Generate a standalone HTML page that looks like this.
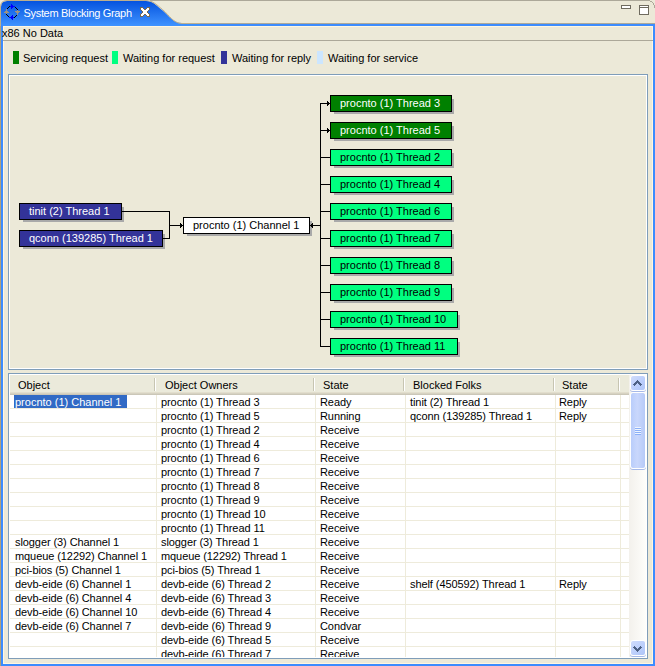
<!DOCTYPE html>
<html><head><meta charset="utf-8">
<style>
*{margin:0;padding:0;box-sizing:border-box}
html,body{width:655px;height:666px;overflow:hidden;background:#ECE9D8;font-family:"Liberation Sans",sans-serif;font-size:11px;color:#000}
.a{position:absolute}
.t{position:absolute;white-space:nowrap;line-height:15px;height:15px}
.w{color:#fff}
</style></head><body>
<!-- header strip -->
<div class="a" style="left:0;top:0;width:655px;height:24px;background:#ECE9D8"></div>
<div class="a" style="left:146px;top:0;width:504px;height:1px;background:#ACA899"></div><svg class="a" style="left:648px;top:0" width="7" height="8" shape-rendering="crispEdges"><rect x="2" y="1" width="2" height="1" fill="#ACA899"/><rect x="4" y="2" width="1" height="1" fill="#ACA899"/><rect x="5" y="3" width="1" height="2" fill="#ACA899"/><rect x="6" y="5" width="1" height="3" fill="#ACA899"/></svg>
<div class="a" style="left:0;top:0;width:1px;height:666px;background:#ACA07F"></div>
<div class="a" style="left:0;top:23px;width:655px;height:1px;background:#ACA899"></div>
<div class="a" style="left:1px;top:24px;width:654px;height:2px;background:#3C8CFF"></div>
<!-- active tab -->
<svg class="a" style="left:0;top:0" width="200" height="26">
<defs><linearGradient id="tg" x1="0" y1="0" x2="0" y2="1"><stop offset="0" stop-color="#0553DF"/><stop offset="1" stop-color="#3F93FF"/></linearGradient></defs>
<path d="M0,0 L150,0 L150,8 L0,8 Z" fill="#EFEBDC"/><path d="M1,26 L1,7 Q1,1 7,1 L146,1 C153,1 157,6 162,10 C169,16 173,23 182,23 L200,23 L200,26 Z" fill="url(#tg)"/>
<path d="M0.5,26 L0.5,7 Q0.5,0.5 7,0.5 L146,0.5 C153,0.5 157.5,5.5 162.5,9.5 C169.5,15.5 173.5,23.5 182,23.5 L200,23.5" fill="none" stroke="#BDAF8E" stroke-width="1"/>
</svg>
<svg class="a" style="left:3px;top:3px" width="18" height="18" shape-rendering="crispEdges"><rect x="8" y="1" width="1" height="1" fill="#0000FF"/><rect x="8" y="2" width="2" height="1" fill="#0000FF"/><rect x="6" y="3" width="1" height="1" fill="#000000"/><rect x="7" y="3" width="5" height="1" fill="#0000FF"/><rect x="5" y="4" width="1" height="1" fill="#000000"/><rect x="8" y="4" width="2" height="1" fill="#0000FF"/><rect x="12" y="4" width="1" height="1" fill="#000000"/><rect x="4" y="5" width="1" height="1" fill="#000000"/><rect x="8" y="5" width="1" height="1" fill="#0000FF"/><rect x="13" y="5" width="1" height="1" fill="#000000"/><rect x="3" y="6" width="1" height="1" fill="#9E937F"/><rect x="14" y="6" width="1" height="1" fill="#000000"/><rect x="3" y="7" width="1" height="1" fill="#9E937F"/><rect x="14" y="7" width="1" height="1" fill="#9E937F"/><rect x="2" y="8" width="3" height="1" fill="#9E937F"/><rect x="12" y="8" width="5" height="1" fill="#9E937F"/><rect x="1" y="9" width="5" height="1" fill="#9E937F"/><rect x="13" y="9" width="3" height="1" fill="#9E937F"/><rect x="3" y="10" width="1" height="1" fill="#9E937F"/><rect x="14" y="10" width="1" height="1" fill="#9E937F"/><rect x="3" y="11" width="1" height="1" fill="#000000"/><rect x="14" y="11" width="1" height="1" fill="#9E937F"/><rect x="4" y="12" width="1" height="1" fill="#000000"/><rect x="9" y="12" width="1" height="1" fill="#0000FF"/><rect x="13" y="12" width="1" height="1" fill="#000000"/><rect x="5" y="13" width="1" height="1" fill="#000000"/><rect x="8" y="13" width="2" height="1" fill="#0000FF"/><rect x="12" y="13" width="1" height="1" fill="#000000"/><rect x="6" y="14" width="5" height="1" fill="#0000FF"/><rect x="11" y="14" width="1" height="1" fill="#000000"/><rect x="8" y="15" width="2" height="1" fill="#0000FF"/><rect x="9" y="16" width="1" height="1" fill="#0000FF"/></svg>
<div class="t w" style="left:23.5px;top:6px;letter-spacing:-0.32px">System Blocking Graph</div>
<svg class="a" style="left:140px;top:7px" width="10" height="10" shape-rendering="crispEdges"><rect x="0" y="0" width="3" height="1" fill="#7A6A50"/><rect x="7" y="0" width="3" height="1" fill="#7A6A50"/><rect x="0" y="1" width="1" height="1" fill="#7A6A50"/><rect x="1" y="1" width="2" height="1" fill="#FFFFFF"/><rect x="3" y="1" width="1" height="1" fill="#7A6A50"/><rect x="6" y="1" width="1" height="1" fill="#7A6A50"/><rect x="7" y="1" width="2" height="1" fill="#FFFFFF"/><rect x="9" y="1" width="1" height="1" fill="#7A6A50"/><rect x="0" y="2" width="1" height="1" fill="#7A6A50"/><rect x="1" y="2" width="3" height="1" fill="#FFFFFF"/><rect x="4" y="2" width="2" height="1" fill="#7A6A50"/><rect x="6" y="2" width="3" height="1" fill="#FFFFFF"/><rect x="9" y="2" width="1" height="1" fill="#7A6A50"/><rect x="1" y="3" width="1" height="1" fill="#7A6A50"/><rect x="2" y="3" width="6" height="1" fill="#FFFFFF"/><rect x="8" y="3" width="1" height="1" fill="#7A6A50"/><rect x="2" y="4" width="1" height="1" fill="#7A6A50"/><rect x="3" y="4" width="4" height="1" fill="#FFFFFF"/><rect x="7" y="4" width="1" height="1" fill="#7A6A50"/><rect x="2" y="5" width="1" height="1" fill="#7A6A50"/><rect x="3" y="5" width="4" height="1" fill="#FFFFFF"/><rect x="7" y="5" width="1" height="1" fill="#7A6A50"/><rect x="1" y="6" width="1" height="1" fill="#7A6A50"/><rect x="2" y="6" width="6" height="1" fill="#FFFFFF"/><rect x="8" y="6" width="1" height="1" fill="#7A6A50"/><rect x="0" y="7" width="1" height="1" fill="#7A6A50"/><rect x="1" y="7" width="3" height="1" fill="#FFFFFF"/><rect x="4" y="7" width="2" height="1" fill="#7A6A50"/><rect x="6" y="7" width="3" height="1" fill="#FFFFFF"/><rect x="9" y="7" width="1" height="1" fill="#7A6A50"/><rect x="0" y="8" width="1" height="1" fill="#7A6A50"/><rect x="1" y="8" width="2" height="1" fill="#FFFFFF"/><rect x="3" y="8" width="1" height="1" fill="#7A6A50"/><rect x="6" y="8" width="1" height="1" fill="#7A6A50"/><rect x="7" y="8" width="2" height="1" fill="#FFFFFF"/><rect x="9" y="8" width="1" height="1" fill="#7A6A50"/><rect x="0" y="9" width="3" height="1" fill="#7A6A50"/><rect x="7" y="9" width="3" height="1" fill="#7A6A50"/></svg>
<!-- min/max -->
<div class="a" style="left:621px;top:5px;width:10px;height:4px;border:1px solid #6F6B5F;background:#fff"></div>
<div class="a" style="left:639px;top:5px;width:10px;height:10px;border:1px solid #6F6B5F;background:#fff"></div><div class="a" style="left:640px;top:7px;width:8px;height:1px;background:#6F6B5F"></div>

<!-- frame -->
<div class="a" style="left:1px;top:24px;width:2px;height:642px;background:#3C8CFF"></div>
<div class="a" style="left:653px;top:24px;width:2px;height:642px;background:#3C8CFF"></div>
<div class="a" style="left:1px;top:664px;width:654px;height:2px;background:#3C8CFF"></div>
<div class="a" style="left:3px;top:26px;width:650px;height:638px;border:1px solid #FFF6E0;border-right-color:#FFF6E0"></div>

<div class="t" style="left:2px;top:26px">x86 No Data</div>
<div class="a" style="left:3px;top:40px;width:650px;height:1px;background:#ACA899"></div>

<!-- legend -->
<div class="a" style="left:13px;top:51px;width:6px;height:13px;background:#008000"></div>
<div class="t" style="left:23px;top:51px">Servicing request</div>
<div class="a" style="left:112px;top:51px;width:6px;height:13px;background:#00FF80"></div>
<div class="t" style="left:123px;top:51px">Waiting for request</div>
<div class="a" style="left:221px;top:51px;width:6px;height:13px;background:#333399"></div>
<div class="t" style="left:232px;top:51px">Waiting for reply</div>
<div class="a" style="left:317px;top:51px;width:6px;height:13px;background:#CCE6FF"></div>
<div class="t" style="left:328px;top:51px">Waiting for service</div>

<!-- graph panel -->
<div class="a" style="left:8px;top:74px;width:640px;height:296px;border:1px solid #7F9DB9"></div>
<div class="a" style="left:9px;top:75px;width:638px;height:294px;border:1px solid #fff"></div>
<div class="a" style="left:23px;top:207px;width:101px;height:15px;background:#A9A9A9"></div>
<div class="a" style="left:19px;top:203px;width:103px;height:17px;background:#333399;border:1px solid #000"></div>
<div class="t" style="left:29px;top:204px;color:#fff">tinit (2) Thread 1</div>
<div class="a" style="left:23px;top:234px;width:142px;height:15px;background:#A9A9A9"></div>
<div class="a" style="left:19px;top:230px;width:144px;height:17px;background:#333399;border:1px solid #000"></div>
<div class="t" style="left:29px;top:231px;color:#fff">qconn (139285) Thread 1</div>
<div class="a" style="left:187px;top:221px;width:125px;height:15px;background:#A9A9A9"></div>
<div class="a" style="left:183px;top:217px;width:127px;height:17px;background:#fff;border:1px solid #000"></div>
<div class="t" style="left:193px;top:218px;color:#000">procnto (1) Channel 1</div>
<div class="a" style="left:334px;top:99px;width:120px;height:15px;background:#A9A9A9"></div>
<div class="a" style="left:330px;top:95px;width:122px;height:17px;background:#008000;border:1px solid #000"></div>
<div class="t" style="left:340px;top:96px;color:#fff">procnto (1) Thread 3</div>
<div class="a" style="left:334px;top:126px;width:120px;height:15px;background:#A9A9A9"></div>
<div class="a" style="left:330px;top:122px;width:122px;height:17px;background:#008000;border:1px solid #000"></div>
<div class="t" style="left:340px;top:123px;color:#fff">procnto (1) Thread 5</div>
<div class="a" style="left:334px;top:153px;width:120px;height:15px;background:#A9A9A9"></div>
<div class="a" style="left:330px;top:149px;width:122px;height:17px;background:#00FF80;border:1px solid #000"></div>
<div class="t" style="left:340px;top:150px;color:#000">procnto (1) Thread 2</div>
<div class="a" style="left:334px;top:180px;width:120px;height:15px;background:#A9A9A9"></div>
<div class="a" style="left:330px;top:176px;width:122px;height:17px;background:#00FF80;border:1px solid #000"></div>
<div class="t" style="left:340px;top:177px;color:#000">procnto (1) Thread 4</div>
<div class="a" style="left:334px;top:207px;width:120px;height:15px;background:#A9A9A9"></div>
<div class="a" style="left:330px;top:203px;width:122px;height:17px;background:#00FF80;border:1px solid #000"></div>
<div class="t" style="left:340px;top:204px;color:#000">procnto (1) Thread 6</div>
<div class="a" style="left:334px;top:234px;width:120px;height:15px;background:#A9A9A9"></div>
<div class="a" style="left:330px;top:230px;width:122px;height:17px;background:#00FF80;border:1px solid #000"></div>
<div class="t" style="left:340px;top:231px;color:#000">procnto (1) Thread 7</div>
<div class="a" style="left:334px;top:261px;width:120px;height:15px;background:#A9A9A9"></div>
<div class="a" style="left:330px;top:257px;width:122px;height:17px;background:#00FF80;border:1px solid #000"></div>
<div class="t" style="left:340px;top:258px;color:#000">procnto (1) Thread 8</div>
<div class="a" style="left:334px;top:288px;width:120px;height:15px;background:#A9A9A9"></div>
<div class="a" style="left:330px;top:284px;width:122px;height:17px;background:#00FF80;border:1px solid #000"></div>
<div class="t" style="left:340px;top:285px;color:#000">procnto (1) Thread 9</div>
<div class="a" style="left:334px;top:315px;width:126px;height:15px;background:#A9A9A9"></div>
<div class="a" style="left:330px;top:311px;width:128px;height:17px;background:#00FF80;border:1px solid #000"></div>
<div class="t" style="left:340px;top:312px;color:#000">procnto (1) Thread 10</div>
<div class="a" style="left:334px;top:342px;width:126px;height:15px;background:#A9A9A9"></div>
<div class="a" style="left:330px;top:338px;width:128px;height:17px;background:#00FF80;border:1px solid #000"></div>
<div class="t" style="left:340px;top:339px;color:#000">procnto (1) Thread 11</div>
<svg class="a" style="left:0;top:0" width="655" height="370" shape-rendering="crispEdges">
<rect x="122" y="211" width="48" height="1" fill="#000"/>
<rect x="163" y="238" width="7" height="1" fill="#000"/>
<rect x="169" y="211" width="1" height="28" fill="#000"/>
<rect x="169" y="225" width="13" height="1" fill="#000"/>
<rect x="180" y="223" width="1" height="5" fill="#000"/><rect x="181" y="224" width="1" height="3" fill="#000"/><rect x="182" y="225" width="1" height="1" fill="#000"/>
<rect x="320" y="103" width="1" height="244" fill="#000"/>
<rect x="311" y="225" width="10" height="1" fill="#000"/>
<rect x="312" y="223" width="1" height="5" fill="#000"/><rect x="311" y="224" width="1" height="3" fill="#000"/><rect x="310" y="225" width="1" height="1" fill="#000"/>
<rect x="320" y="103" width="10" height="1" fill="#000"/>
<rect x="327" y="101" width="1" height="5" fill="#000"/><rect x="328" y="102" width="1" height="3" fill="#000"/><rect x="329" y="103" width="1" height="1" fill="#000"/>
<rect x="320" y="130" width="10" height="1" fill="#000"/>
<rect x="327" y="128" width="1" height="5" fill="#000"/><rect x="328" y="129" width="1" height="3" fill="#000"/><rect x="329" y="130" width="1" height="1" fill="#000"/>
<rect x="320" y="157" width="10" height="1" fill="#000"/>
<rect x="320" y="184" width="10" height="1" fill="#000"/>
<rect x="320" y="211" width="10" height="1" fill="#000"/>
<rect x="320" y="238" width="10" height="1" fill="#000"/>
<rect x="320" y="265" width="10" height="1" fill="#000"/>
<rect x="320" y="292" width="10" height="1" fill="#000"/>
<rect x="320" y="319" width="10" height="1" fill="#000"/>
<rect x="320" y="346" width="10" height="1" fill="#000"/>
</svg>

<!-- table panel -->
<div class="a" style="left:8px;top:373px;width:640px;height:286px;border:1px solid #7F9DB9;background:#fff"></div>
<div class="a" style="left:9px;top:374px;width:638px;height:283px;overflow:hidden"><div class="a" style="left:-9px;top:-374px;width:655px;height:666px"><div class="a" style="left:10px;top:375px;width:619px;height:20px;background:#EBEADB"></div>
<div class="a" style="left:10px;top:392px;width:619px;height:1px;background:#E2DECD"></div>
<div class="a" style="left:10px;top:393px;width:619px;height:1px;background:#D6D2C2"></div>
<div class="a" style="left:10px;top:394px;width:619px;height:1px;background:#CBC7B8"></div>
<div class="a" style="left:154px;top:378px;width:1px;height:13px;background:#C7C5B2"></div>
<div class="a" style="left:155px;top:378px;width:1px;height:13px;background:#fff"></div>
<div class="a" style="left:313px;top:378px;width:1px;height:13px;background:#C7C5B2"></div>
<div class="a" style="left:314px;top:378px;width:1px;height:13px;background:#fff"></div>
<div class="a" style="left:403px;top:378px;width:1px;height:13px;background:#C7C5B2"></div>
<div class="a" style="left:404px;top:378px;width:1px;height:13px;background:#fff"></div>
<div class="a" style="left:553px;top:378px;width:1px;height:13px;background:#C7C5B2"></div>
<div class="a" style="left:554px;top:378px;width:1px;height:13px;background:#fff"></div>
<div class="a" style="left:618px;top:378px;width:1px;height:13px;background:#C7C5B2"></div>
<div class="a" style="left:619px;top:378px;width:1px;height:13px;background:#fff"></div>
<div class="t" style="left:18px;top:378px">Object</div>
<div class="t" style="left:165px;top:378px">Object Owners</div>
<div class="t" style="left:323px;top:378px">State</div>
<div class="t" style="left:413px;top:378px">Blocked Folks</div>
<div class="t" style="left:562px;top:378px">State</div>
<div class="a" style="left:156px;top:395px;width:1px;height:262px;background:#EEEBDB"></div>
<div class="a" style="left:315px;top:395px;width:1px;height:262px;background:#EEEBDB"></div>
<div class="a" style="left:405px;top:395px;width:1px;height:262px;background:#EEEBDB"></div>
<div class="a" style="left:555px;top:395px;width:1px;height:262px;background:#EEEBDB"></div>
<div class="a" style="left:620px;top:395px;width:1px;height:262px;background:#EEEBDB"></div>
<div class="a" style="left:10px;top:408px;width:619px;height:1px;background:#EEEBDB"></div>
<div class="a" style="left:10px;top:422px;width:619px;height:1px;background:#EEEBDB"></div>
<div class="a" style="left:10px;top:436px;width:619px;height:1px;background:#EEEBDB"></div>
<div class="a" style="left:10px;top:450px;width:619px;height:1px;background:#EEEBDB"></div>
<div class="a" style="left:10px;top:464px;width:619px;height:1px;background:#EEEBDB"></div>
<div class="a" style="left:10px;top:478px;width:619px;height:1px;background:#EEEBDB"></div>
<div class="a" style="left:10px;top:492px;width:619px;height:1px;background:#EEEBDB"></div>
<div class="a" style="left:10px;top:506px;width:619px;height:1px;background:#EEEBDB"></div>
<div class="a" style="left:10px;top:520px;width:619px;height:1px;background:#EEEBDB"></div>
<div class="a" style="left:10px;top:534px;width:619px;height:1px;background:#EEEBDB"></div>
<div class="a" style="left:10px;top:548px;width:619px;height:1px;background:#EEEBDB"></div>
<div class="a" style="left:10px;top:562px;width:619px;height:1px;background:#EEEBDB"></div>
<div class="a" style="left:10px;top:576px;width:619px;height:1px;background:#EEEBDB"></div>
<div class="a" style="left:10px;top:590px;width:619px;height:1px;background:#EEEBDB"></div>
<div class="a" style="left:10px;top:604px;width:619px;height:1px;background:#EEEBDB"></div>
<div class="a" style="left:10px;top:618px;width:619px;height:1px;background:#EEEBDB"></div>
<div class="a" style="left:10px;top:632px;width:619px;height:1px;background:#EEEBDB"></div>
<div class="a" style="left:10px;top:646px;width:619px;height:1px;background:#EEEBDB"></div>
<div class="a" style="left:14px;top:395px;width:113px;height:13px;background:#316AC5"></div>
<div class="t w" style="left:15px;top:395px">procnto (1) Channel 1</div>
<div class="t" style="left:161px;top:395px;letter-spacing:-0.08px">procnto (1) Thread 3</div>
<div class="t" style="left:320px;top:395px;letter-spacing:-0.08px">Ready</div>
<div class="t" style="left:410px;top:395px;letter-spacing:-0.08px">tinit (2) Thread 1</div>
<div class="t" style="left:559px;top:395px;letter-spacing:-0.08px">Reply</div>
<div class="t" style="left:161px;top:409px;letter-spacing:-0.08px">procnto (1) Thread 5</div>
<div class="t" style="left:320px;top:409px;letter-spacing:-0.08px">Running</div>
<div class="t" style="left:410px;top:409px;letter-spacing:-0.08px">qconn (139285) Thread 1</div>
<div class="t" style="left:559px;top:409px;letter-spacing:-0.08px">Reply</div>
<div class="t" style="left:161px;top:423px;letter-spacing:-0.08px">procnto (1) Thread 2</div>
<div class="t" style="left:320px;top:423px;letter-spacing:-0.08px">Receive</div>
<div class="t" style="left:161px;top:437px;letter-spacing:-0.08px">procnto (1) Thread 4</div>
<div class="t" style="left:320px;top:437px;letter-spacing:-0.08px">Receive</div>
<div class="t" style="left:161px;top:451px;letter-spacing:-0.08px">procnto (1) Thread 6</div>
<div class="t" style="left:320px;top:451px;letter-spacing:-0.08px">Receive</div>
<div class="t" style="left:161px;top:465px;letter-spacing:-0.08px">procnto (1) Thread 7</div>
<div class="t" style="left:320px;top:465px;letter-spacing:-0.08px">Receive</div>
<div class="t" style="left:161px;top:479px;letter-spacing:-0.08px">procnto (1) Thread 8</div>
<div class="t" style="left:320px;top:479px;letter-spacing:-0.08px">Receive</div>
<div class="t" style="left:161px;top:493px;letter-spacing:-0.08px">procnto (1) Thread 9</div>
<div class="t" style="left:320px;top:493px;letter-spacing:-0.08px">Receive</div>
<div class="t" style="left:161px;top:507px;letter-spacing:-0.08px">procnto (1) Thread 10</div>
<div class="t" style="left:320px;top:507px;letter-spacing:-0.08px">Receive</div>
<div class="t" style="left:161px;top:521px;letter-spacing:-0.08px">procnto (1) Thread 11</div>
<div class="t" style="left:320px;top:521px;letter-spacing:-0.08px">Receive</div>
<div class="t" style="left:15px;top:535px;letter-spacing:-0.08px">slogger (3) Channel 1</div>
<div class="t" style="left:161px;top:535px;letter-spacing:-0.08px">slogger (3) Thread 1</div>
<div class="t" style="left:320px;top:535px;letter-spacing:-0.08px">Receive</div>
<div class="t" style="left:15px;top:549px;letter-spacing:-0.08px">mqueue (12292) Channel 1</div>
<div class="t" style="left:161px;top:549px;letter-spacing:-0.08px">mqueue (12292) Thread 1</div>
<div class="t" style="left:320px;top:549px;letter-spacing:-0.08px">Receive</div>
<div class="t" style="left:15px;top:563px;letter-spacing:-0.08px">pci-bios (5) Channel 1</div>
<div class="t" style="left:161px;top:563px;letter-spacing:-0.08px">pci-bios (5) Thread 1</div>
<div class="t" style="left:320px;top:563px;letter-spacing:-0.08px">Receive</div>
<div class="t" style="left:15px;top:577px;letter-spacing:-0.08px">devb-eide (6) Channel 1</div>
<div class="t" style="left:161px;top:577px;letter-spacing:-0.08px">devb-eide (6) Thread 2</div>
<div class="t" style="left:320px;top:577px;letter-spacing:-0.08px">Receive</div>
<div class="t" style="left:410px;top:577px;letter-spacing:-0.08px">shelf (450592) Thread 1</div>
<div class="t" style="left:559px;top:577px;letter-spacing:-0.08px">Reply</div>
<div class="t" style="left:15px;top:591px;letter-spacing:-0.08px">devb-eide (6) Channel 4</div>
<div class="t" style="left:161px;top:591px;letter-spacing:-0.08px">devb-eide (6) Thread 3</div>
<div class="t" style="left:320px;top:591px;letter-spacing:-0.08px">Receive</div>
<div class="t" style="left:15px;top:605px;letter-spacing:-0.08px">devb-eide (6) Channel 10</div>
<div class="t" style="left:161px;top:605px;letter-spacing:-0.08px">devb-eide (6) Thread 4</div>
<div class="t" style="left:320px;top:605px;letter-spacing:-0.08px">Receive</div>
<div class="t" style="left:15px;top:619px;letter-spacing:-0.08px">devb-eide (6) Channel 7</div>
<div class="t" style="left:161px;top:619px;letter-spacing:-0.08px">devb-eide (6) Thread 9</div>
<div class="t" style="left:320px;top:619px;letter-spacing:-0.08px">Condvar</div>
<div class="t" style="left:161px;top:633px;letter-spacing:-0.08px">devb-eide (6) Thread 5</div>
<div class="t" style="left:320px;top:633px;letter-spacing:-0.08px">Receive</div>
<div class="t" style="left:161px;top:647px;letter-spacing:-0.08px">devb-eide (6) Thread 7</div>
<div class="t" style="left:320px;top:647px;letter-spacing:-0.08px">Receive</div></div></div>
<div class="a" style="left:629px;top:375px;width:17px;height:282px;background:linear-gradient(90deg,#F3F1EC,#FEFEFB)"></div>
<div class="a" style="left:630px;top:375px;width:16px;height:16px;border:1px solid #fff;border-radius:3px;box-shadow:0 1px 0 #A6B9E8;background:linear-gradient(135deg,#D0DCFB,#BCCFFC 55%,#AFC5F7)"></div>
<div class="a" style="left:630px;top:640px;width:16px;height:16px;border:1px solid #fff;border-radius:3px;box-shadow:0 1px 0 #A6B9E8;background:linear-gradient(135deg,#D0DCFB,#BCCFFC 55%,#AFC5F7)"></div>
<svg class="a" style="left:633px;top:380px" width="9" height="6" shape-rendering="crispEdges"><rect x="4" y="0" width="1" height="1" fill="#4D6185"/><rect x="3" y="1" width="3" height="1" fill="#4D6185"/><rect x="2" y="2" width="5" height="1" fill="#4D6185"/><rect x="1" y="3" width="3" height="1" fill="#4D6185"/><rect x="5" y="3" width="3" height="1" fill="#4D6185"/><rect x="0" y="4" width="3" height="1" fill="#4D6185"/><rect x="6" y="4" width="3" height="1" fill="#4D6185"/><rect x="1" y="5" width="1" height="1" fill="#4D6185"/><rect x="7" y="5" width="1" height="1" fill="#4D6185"/></svg>
<svg class="a" style="left:633px;top:646px" width="9" height="6" shape-rendering="crispEdges"><rect x="1" y="0" width="1" height="1" fill="#4D6185"/><rect x="7" y="0" width="1" height="1" fill="#4D6185"/><rect x="0" y="1" width="3" height="1" fill="#4D6185"/><rect x="6" y="1" width="3" height="1" fill="#4D6185"/><rect x="1" y="2" width="3" height="1" fill="#4D6185"/><rect x="5" y="2" width="3" height="1" fill="#4D6185"/><rect x="2" y="3" width="5" height="1" fill="#4D6185"/><rect x="3" y="4" width="3" height="1" fill="#4D6185"/><rect x="4" y="5" width="1" height="1" fill="#4D6185"/></svg>
<div class="a" style="left:630px;top:392px;width:16px;height:77px;border:1px solid #fff;border-radius:3px;box-shadow:0 1px 0 #A6B9E8;background:linear-gradient(90deg,#B9CDFB,#C9D7FC 45%,#B6CAF8)"></div>
<div class="a" style="left:635px;top:427px;width:6px;height:1px;background:#EEF4FE"></div>
<div class="a" style="left:635px;top:428px;width:6px;height:1px;background:#8CB0F8"></div>
<div class="a" style="left:635px;top:429px;width:6px;height:1px;background:#EEF4FE"></div>
<div class="a" style="left:635px;top:430px;width:6px;height:1px;background:#8CB0F8"></div>
<div class="a" style="left:635px;top:431px;width:6px;height:1px;background:#EEF4FE"></div>
<div class="a" style="left:635px;top:432px;width:6px;height:1px;background:#8CB0F8"></div>
<div class="a" style="left:635px;top:433px;width:6px;height:1px;background:#EEF4FE"></div>
<div class="a" style="left:635px;top:434px;width:6px;height:1px;background:#8CB0F8"></div>
</body></html>
